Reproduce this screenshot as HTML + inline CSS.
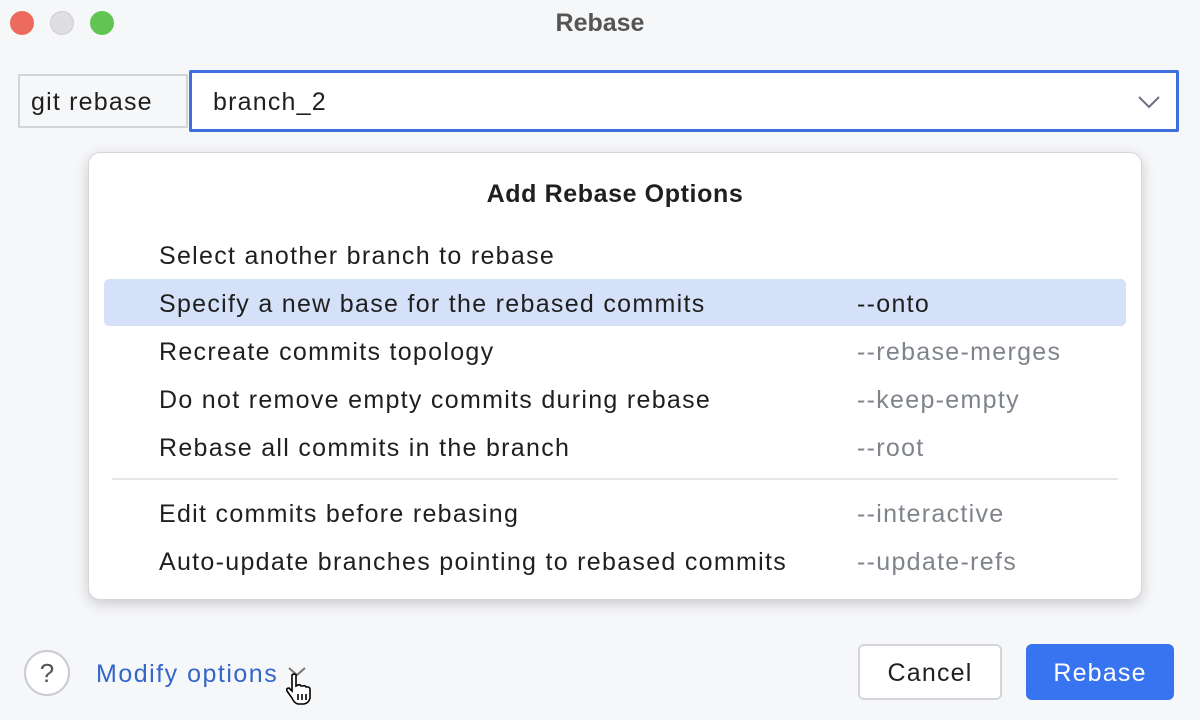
<!DOCTYPE html>
<html><head><style>
body{margin:0;width:1200px;height:720px;background:#f6f7f9;font-family:"Liberation Sans",sans-serif;position:relative;overflow:hidden;color:#1f1f1f}
.a{position:absolute}
.dot{width:24px;height:24px;border-radius:50%;top:11px}
.item{position:absolute;left:159px;font-size:25px;color:#1f1f1f;letter-spacing:1.3px}
.opt{position:absolute;left:857px;font-size:25px;color:#7f848b;letter-spacing:1.3px}
</style></head><body>
<div class="a dot" style="left:10px;background:#ed6a5e;"></div>
<div class="a dot" style="left:50px;background:#dfdfe1;border:1px solid #cfcfd2;width:22px;height:22px"></div>
<div class="a dot" style="left:90px;background:#61c554;"></div>
<div class="a" style="left:0;width:1200px;top:9px;text-align:center;font-size:25px;font-weight:bold;color:#555">Rebase</div>
<div class="a" style="left:18px;top:74px;width:170px;height:54px;border:2px solid #d3d5da;box-sizing:border-box;background:#f6f7f9"></div>
<div class="a" style="left:31px;top:88px;font-size:25px;letter-spacing:1.2px">git rebase</div>
<div class="a" style="left:189px;top:70px;width:990px;height:62px;border:3px solid #3c6fe0;box-sizing:border-box;background:#fff;border-radius:2px"></div>
<div class="a" style="left:213px;top:88px;font-size:25px;letter-spacing:1.2px">branch_2</div>
<svg class="a" style="left:1136px;top:94px" width="26" height="16"><path d="M3 3 L13 13 L23 3" fill="none" stroke="#6c707e" stroke-width="2"/></svg>
<div class="a" style="left:88px;top:152px;width:1054px;height:448px;background:#fff;border:1px solid #d6d7db;border-radius:12px;box-shadow:0 4px 14px rgba(0,0,0,.18);box-sizing:border-box"></div>
<div class="a" style="left:88px;width:1054px;top:180px;text-align:center;font-size:25px;font-weight:bold;letter-spacing:0.6px">Add Rebase Options</div>
<div class="a" style="left:104px;top:279px;width:1022px;height:47px;background:#d5e0f9;border-radius:5px"></div>
<div class="item" style="top:242px">Select another branch to rebase</div>
<div class="item" style="top:290px">Specify a new base for the rebased commits</div><div class="opt" style="top:290px;color:#1f1f1f">--onto</div>
<div class="item" style="top:338px">Recreate commits topology</div><div class="opt" style="top:338px">--rebase-merges</div>
<div class="item" style="top:386px">Do not remove empty commits during rebase</div><div class="opt" style="top:386px">--keep-empty</div>
<div class="item" style="top:434px">Rebase all commits in the branch</div><div class="opt" style="top:434px">--root</div>
<div class="a" style="left:112px;top:478px;width:1006px;height:2px;background:#e5e6ea"></div>
<div class="item" style="top:500px">Edit commits before rebasing</div><div class="opt" style="top:500px">--interactive</div>
<div class="item" style="top:548px">Auto-update branches pointing to rebased commits</div><div class="opt" style="top:548px">--update-refs</div>
<div class="a" style="left:24px;top:650px;width:42px;height:42px;border:2px solid #c9cbd0;border-radius:50%;background:#fff;text-align:center;line-height:42px;font-size:26px;color:#555">?</div>
<div class="a" style="left:96px;top:660px;font-size:25px;color:#3366c8;letter-spacing:1.5px">Modify options</div>
<svg class="a" style="left:287px;top:666px" width="20" height="12"><path d="M2 2 L10 9 L18 2" fill="none" stroke="#777" stroke-width="2"/></svg>
<svg class="a" style="left:284px;top:672px" width="30" height="34"><path d="M8 3 Q10 1 12 3 L12 14 L14 13 Q16 12 17 14 L19 14 Q21 13 22 15 L24 15 Q26 15 26 18 L26 26 Q25 31 20 32 L14 32 Q10 31 8 26 L3 19 Q2 16 5 16 L8 19 Z" fill="#fff" stroke="#000" stroke-width="1.6"/><path d="M14 22 V28 M18 22 V28 M22 22 V28" stroke="#000" stroke-width="1.6"/></svg>
<div class="a" style="left:858px;top:644px;width:144px;height:56px;border:2px solid #d3d5da;box-sizing:border-box;border-radius:6px;background:#fff;text-align:center;line-height:54px;font-size:25px;letter-spacing:1.2px">Cancel</div>
<div class="a" style="left:1026px;top:644px;width:148px;height:56px;border-radius:6px;background:#3874f0;text-align:center;line-height:58px;font-size:25px;color:#fff;letter-spacing:1.2px">Rebase</div>
</body></html>
